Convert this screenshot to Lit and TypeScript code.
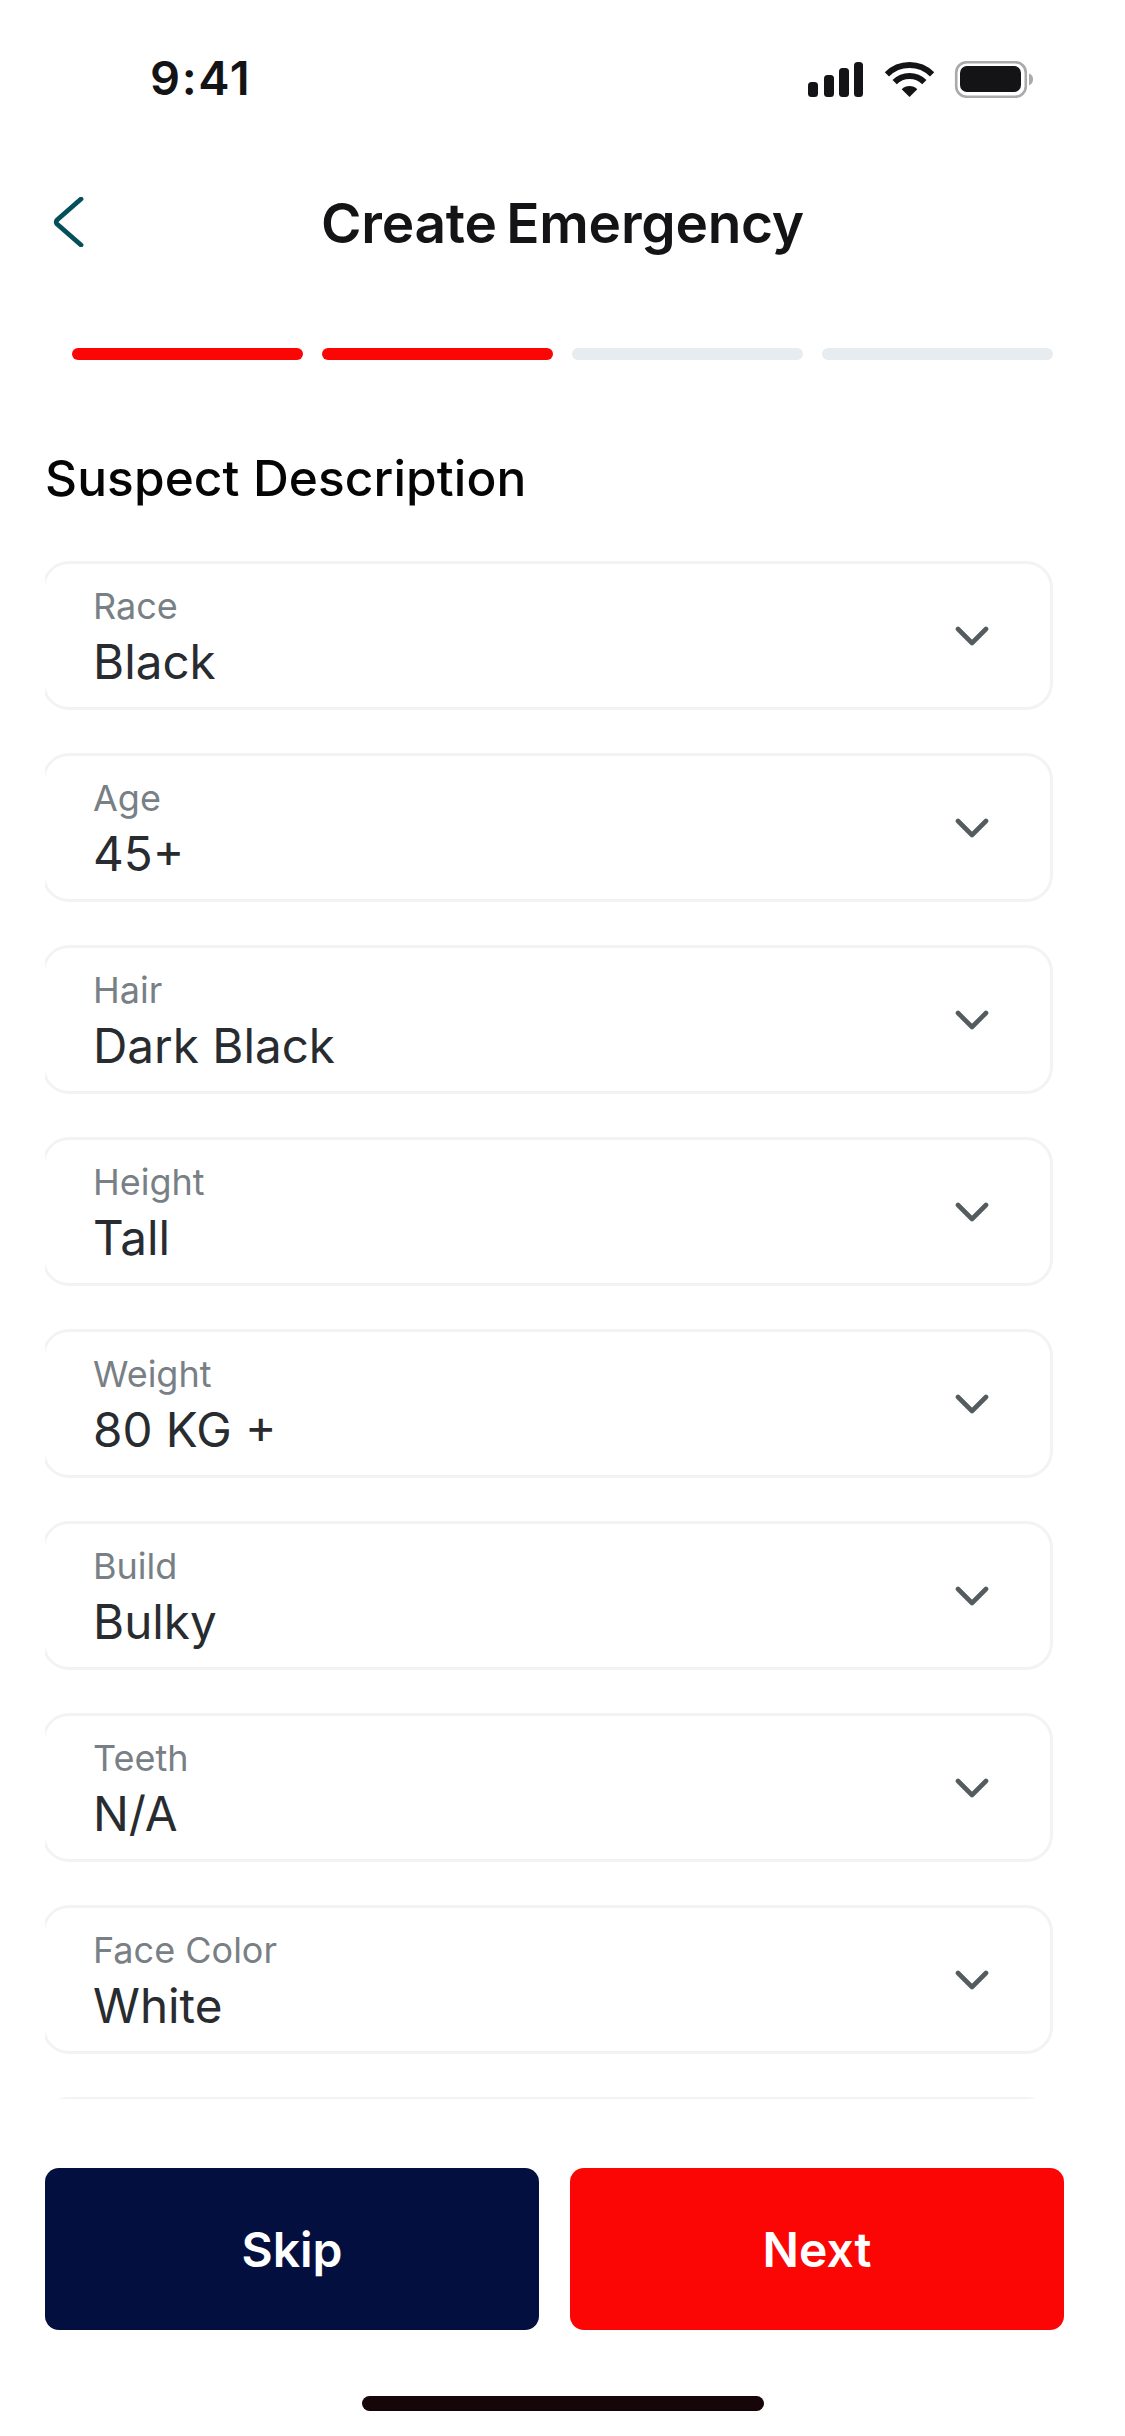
import { LitElement, html, css, svg } from "lit";
import { customElement } from "lit/decorators.js";

const FIELDS: [string, string][] = [
  ["Race", "Black"],
  ["Age", "45+"],
  ["Hair", "Dark Black"],
  ["Height", "Tall"],
  ["Weight", "80 KG +"],
  ["Build", "Bulky"],
  ["Teeth", "N/A"],
  ["Face Color", "White"],
  ["", ""],
];

@customElement("app-root")
export class AppRoot extends LitElement {
  static styles = css`
    :host { display: block; width: 1125px; height: 2436px; background: #fff; font-family: Inter, "Liberation Sans", sans-serif; overflow: hidden; }
    .page { display: flex; flex-direction: column; height: 2436px; }
    .status { display: flex; align-items: flex-start; height: 197px; box-sizing: border-box; padding: 0 92px 0 150px; }
    .time { font-size: 47px; line-height: 57px; font-weight: 600; color: #141416; margin-top: 49px; letter-spacing: 1.6px; flex: 1; }
    .sig { display: block; margin-top: 61px; }
    .nav { display: flex; align-items: flex-start; height: 151px; box-sizing: border-box; padding-left: 52px; }
    .back { display: block; flex: none; }
    .title { flex: none; margin-left: 234px; font-size: 55px; line-height: 64px; font-weight: 600; color: #141416; letter-spacing: -0.25px; word-spacing: -4px; margin-top: -6px; white-space: nowrap; }
    .progress { display: flex; gap: 19px; padding: 0 72px 0 72px; height: 12px; flex: none; }
    .seg { flex: 1; border-radius: 6px; background: #e7ecf0; }
    .seg.on { background: #fc0505; }
    h2 { margin: 89px 0 0; padding: 0 0 0 45px; font-size: 49.6px; line-height: 58px; font-weight: 500; color: #050505; letter-spacing: 0.1px; flex: none; }
    .list { flex: none; height: 1538px; margin: 54px 0 0 45px; overflow: hidden; display: flex; flex-direction: column; gap: 43px; padding: 0 72px 0 0; }
    .card { flex: none; box-sizing: border-box; height: 149px; margin-left: -3px; border: 3px solid #f1f3f4; border-radius: 27px; display: flex; align-items: center; padding: 0 61px 0 48px; }
    .text { flex: 1; display: flex; flex-direction: column; margin-top: 2px; }
    .label { font-size: 36px; line-height: 44px; color: #787f85; }
    .value { font-size: 47.6px; line-height: 56px; color: #282c30; margin-top: 6px; }
    .footer { flex: none; display: flex; gap: 31px; padding: 69px 61px 0 45px; }
    .btn { flex: 1; height: 162px; border-radius: 14px; color: #fff; font-size: 48px; font-weight: 600; display: flex; align-items: center; justify-content: center; }
    .skip { background: #03103f; }
    .next { background: #fc0505; }
    .home { flex: none; align-self: center; width: 402px; height: 15px; border-radius: 8px; background: #170609; margin-top: 66px; }
  `;

  private chevron() {
    return html`<svg width="34" height="20" viewBox="0 0 34 20" fill="none"><path d="M3 3L17 17L31 3" stroke="#555c60" stroke-width="4.6" stroke-linecap="round" stroke-linejoin="round"/></svg>`;
  }

  private statusIcons() {
    return html`<svg class="sig" width="225" height="37" viewBox="0 0 225 37" fill="none">
      ${svg`
      <rect x="0" y="21" width="10" height="15" rx="3.5" fill="#141416"/>
      <rect x="16" y="14" width="10" height="22" rx="3.5" fill="#141416"/>
      <rect x="31" y="7" width="10" height="29" rx="3.5" fill="#141416"/>
      <rect x="46" y="1" width="9" height="35" rx="3.5" fill="#141416"/>
      <g transform="translate(77 1)" >
        <path d="M1.9 12.4A32 32 0 0 1 47.1 12.4" stroke="#141416" stroke-width="6"/>
        <path d="M9.65 20.15A21 21 0 0 1 39.35 20.15" stroke="#141416" stroke-width="6"/>
        <path d="M24.5 35L16.7 27.2A11 11 0 0 1 32.3 27.2Z" fill="#141416"/>
      </g>
      <rect x="148.2" y="1.2" width="69.6" height="34.6" rx="10.5" stroke="#aaaaaa" stroke-width="2.6"/>
      <rect x="152" y="5" width="61" height="26" rx="7" fill="#141416"/>
      <path d="M221 12.5C224 13.5 225 15.5 225 18.5C225 21 224 23 221 24.5Z" fill="#aaaaaa"/>
      `}
    </svg>`;
  }

  render() {
    return html`<div class="page">
      <div class="status">
        <div class="time">9:41</div>
        ${this.statusIcons()}
      </div>
      <div class="nav">
        <svg class="back" width="35" height="50" viewBox="0 0 35 50" fill="none"><path d="M29 2L5 23Q3.5 25 5 27L29 48" stroke="#03505b" stroke-width="4.8" stroke-linecap="round" stroke-linejoin="round"/></svg>
        <div class="title">Create Emergency</div>
      </div>
      <div class="progress">
        <div class="seg on"></div><div class="seg on"></div><div class="seg"></div><div class="seg"></div>
      </div>
      <h2>Suspect Description</h2>
      <div class="list">
        ${FIELDS.map(([l, v]) => html`<div class="card">
          <div class="text"><div class="label">${l}</div><div class="value">${v}</div></div>
          ${this.chevron()}
        </div>`)}
      </div>
      <div class="footer">
        <div class="btn skip">Skip</div>
        <div class="btn next">Next</div>
      </div>
      <div class="home"></div>
    </div>`;
  }
}
